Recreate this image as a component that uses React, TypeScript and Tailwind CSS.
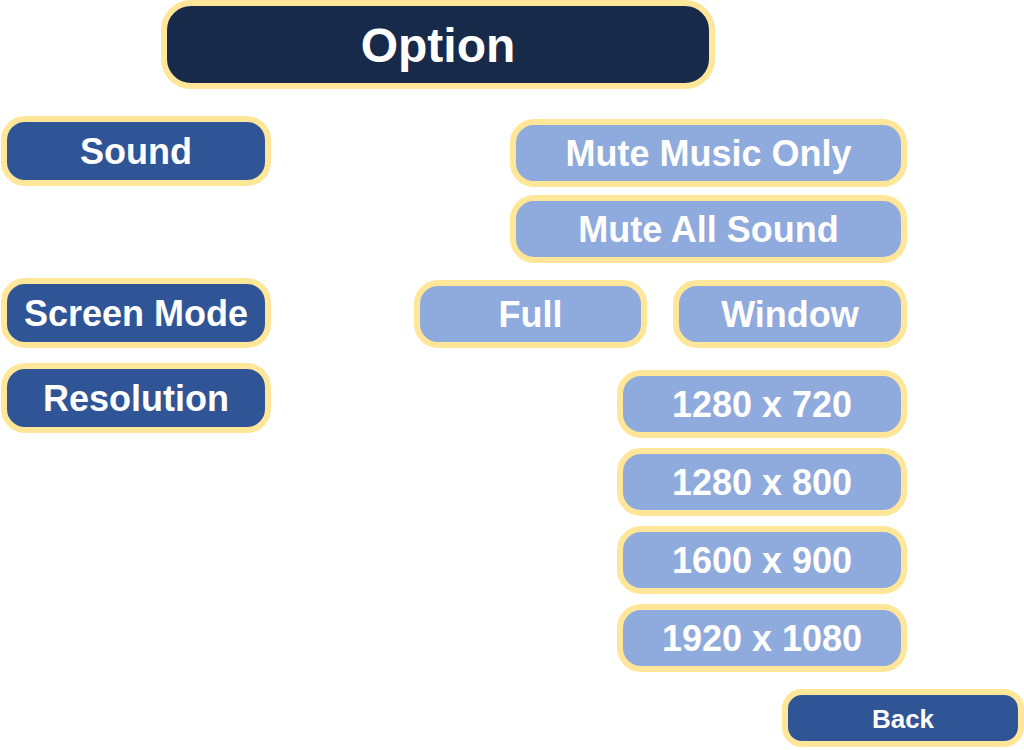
import type { ReactNode } from "react";

const resolutions = ["1280 x 720", "1280 x 800", "1600 x 900", "1920 x 1080"];

function SectionLabel({ children }: { children: ReactNode }) {
  return (
    <h2 className="flex h-[70px] w-[270px] shrink-0 items-center justify-center rounded-3xl border-6 border-[#ffe699] bg-[#2f5597] pt-[2px] whitespace-nowrap">
      {children}
    </h2>
  );
}

function OptionButton({ width, children }: { width: string; children: ReactNode }) {
  return (
    <button
      type="button"
      className={`flex h-[68px] ${width} items-center justify-center rounded-3xl border-6 border-[#ffe699] bg-[#8faadc] pt-[2px] whitespace-nowrap hover:brightness-105`}
    >
      {children}
    </button>
  );
}

export default function App() {
  return (
    <main className="bg-white font-['Arial_Rounded_MT_Bold','Liberation_Sans',sans-serif] text-4xl font-bold text-white">
      <header className="flex justify-center pr-[148px]">
        <h1 className="flex h-[89px] w-[554px] items-center justify-center rounded-[30px] border-6 border-[#ffe699] bg-[#182a4a] pt-[2px] text-5xl">
          Option
        </h1>
      </header>

      <div className="flex flex-col gap-[15px] pt-[27px] pr-[117px] pl-px">
        <section className="flex items-start justify-between">
          <SectionLabel>Sound</SectionLabel>
          <div className="flex flex-col gap-2 pt-[3px]">
            <OptionButton width="w-[397px]">Mute Music Only</OptionButton>
            <OptionButton width="w-[397px]">Mute All Sound</OptionButton>
          </div>
        </section>

        <section className="flex items-start justify-between">
          <SectionLabel>Screen Mode</SectionLabel>
          <div className="flex gap-[26px] pt-[2px]">
            <OptionButton width="w-[233px]">Full</OptionButton>
            <OptionButton width="w-[234px]">Window</OptionButton>
          </div>
        </section>

        <section className="flex items-start justify-between">
          <SectionLabel>Resolution</SectionLabel>
          <div className="flex flex-col gap-[10px] pt-[7px]">
            {resolutions.map((resolution) => (
              <OptionButton key={resolution} width="w-[290px]">
                {resolution}
              </OptionButton>
            ))}
          </div>
        </section>
      </div>

      <footer className="flex justify-end pt-[17px]">
        <button
          type="button"
          className="flex h-[58px] w-[242px] items-center justify-center rounded-[20px] border-6 border-[#ffe699] bg-[#2f5597] pt-[2px] text-[26px] hover:brightness-110"
        >
          Back
        </button>
      </footer>
    </main>
  );
}
